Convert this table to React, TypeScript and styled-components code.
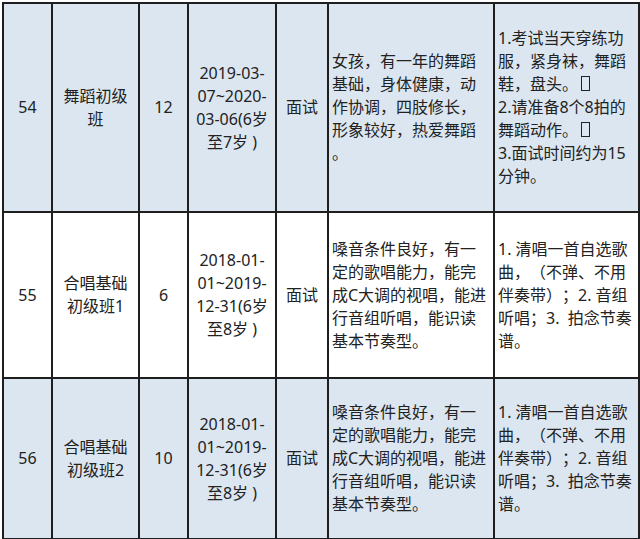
import React from "react";
import styled, { createGlobalStyle } from "styled-components";

const GlobalStyle = createGlobalStyle`
  html, body {
    margin: 0;
    padding: 0;
    background: #ffffff;
  }
  body {
    font-family: "Noto Sans", "Noto Sans CJK SC", sans-serif;
    color: #222;
  }
`;

const Table = styled.table`
  border-collapse: collapse;
  table-layout: fixed;
  width: 636px;
  margin: 2px 0 0 2px;
  font-size: 16px;
  line-height: 23px;
`;

const Col = styled.col<{ $w: number }>`
  width: ${(p) => p.$w}px;
`;

const Row = styled.tr<{ $shaded: boolean; $h: number }>`
  height: ${(p) => p.$h}px;
  background: ${(p) => (p.$shaded ? "#dce6f1" : "#ffffff")};
`;

const Cell = styled.td<{ $align?: "left" | "center" }>`
  border: 2px solid #1e1e1e;
  padding: 0 3px;
  vertical-align: middle;
  text-align: ${(p) => p.$align ?? "center"};
  white-space: pre;
  overflow: hidden;
  text-spacing-trim: space-all;
  font-family: "Noto Sans", "Noto Sans CJK SC", sans-serif;
`;

const Line = styled.div``;

const Tofu = styled.span`
  display: inline-block;
  width: 7px;
  height: 13px;
  margin-left: 3px;
  border: 1.5px solid #222;
  vertical-align: -1px;
`;

interface Entry {
  no: string;
  name: string[];
  count: string;
  age: string[];
  mode: string;
  req: string[];
  notes: React.ReactNode[];
  shaded: boolean;
  height: number;
}

const singNotes = [
  "1. 清唱一首自选歌",
  "曲，（不弹、不用",
  "伴奏带）；2. 音组",
  "听唱；3.  拍念节奏",
  "谱。",
];

const singReq = [
  "嗓音条件良好，有一",
  "定的歌唱能力，能完",
  "成C大调的视唱，能进",
  "行音组听唱，能识读",
  "基本节奏型。",
];

const entries: Entry[] = [
  {
    no: "54",
    name: ["舞蹈初级", "班"],
    count: "12",
    age: ["2019-03-", "07~2020-", "03-06(6岁", "至7岁 )"],
    mode: "面试",
    req: [
      "女孩，有一年的舞蹈",
      "基础，身体健康，动",
      "作协调，四肢修长，",
      "形象较好，热爱舞蹈",
      "。",
    ],
    notes: [
      "1.考试当天穿练功",
      "服，紧身袜，舞蹈",
      <>
        鞋，盘头。
        <Tofu />
      </>,
      "2.请准备8个8拍的",
      <>
        舞蹈动作。
        <Tofu />
      </>,
      "3.面试时间约为15",
      "分钟。",
    ],
    shaded: true,
    height: 209,
  },
  {
    no: "55",
    name: ["合唱基础", "初级班1"],
    count: "6",
    age: ["2018-01-", "01~2019-", "12-31(6岁", "至8岁 )"],
    mode: "面试",
    req: singReq,
    notes: singNotes,
    shaded: false,
    height: 166,
  },
  {
    no: "56",
    name: ["合唱基础", "初级班2"],
    count: "10",
    age: ["2018-01-", "01~2019-", "12-31(6岁", "至8岁 )"],
    mode: "面试",
    req: singReq,
    notes: singNotes,
    shaded: true,
    height: 161,
  },
];

const widths = [49, 87, 49, 88, 52, 166, 145];

const lines = (items: React.ReactNode[]) =>
  items.map((item, i) => <Line key={i}>{item}</Line>);

export default function App() {
  return (
    <>
      <GlobalStyle />
      <Table>
        <colgroup>
          {widths.map((w, i) => (
            <Col key={i} $w={w} />
          ))}
        </colgroup>
        <tbody>
          {entries.map((e) => (
            <Row key={e.no} $shaded={e.shaded} $h={e.height}>
              <Cell>{e.no}</Cell>
              <Cell>{lines(e.name)}</Cell>
              <Cell>{e.count}</Cell>
              <Cell>{lines(e.age)}</Cell>
              <Cell>{e.mode}</Cell>
              <Cell $align="left">{lines(e.req)}</Cell>
              <Cell $align="left">{lines(e.notes)}</Cell>
            </Row>
          ))}
        </tbody>
      </Table>
    </>
  );
}
